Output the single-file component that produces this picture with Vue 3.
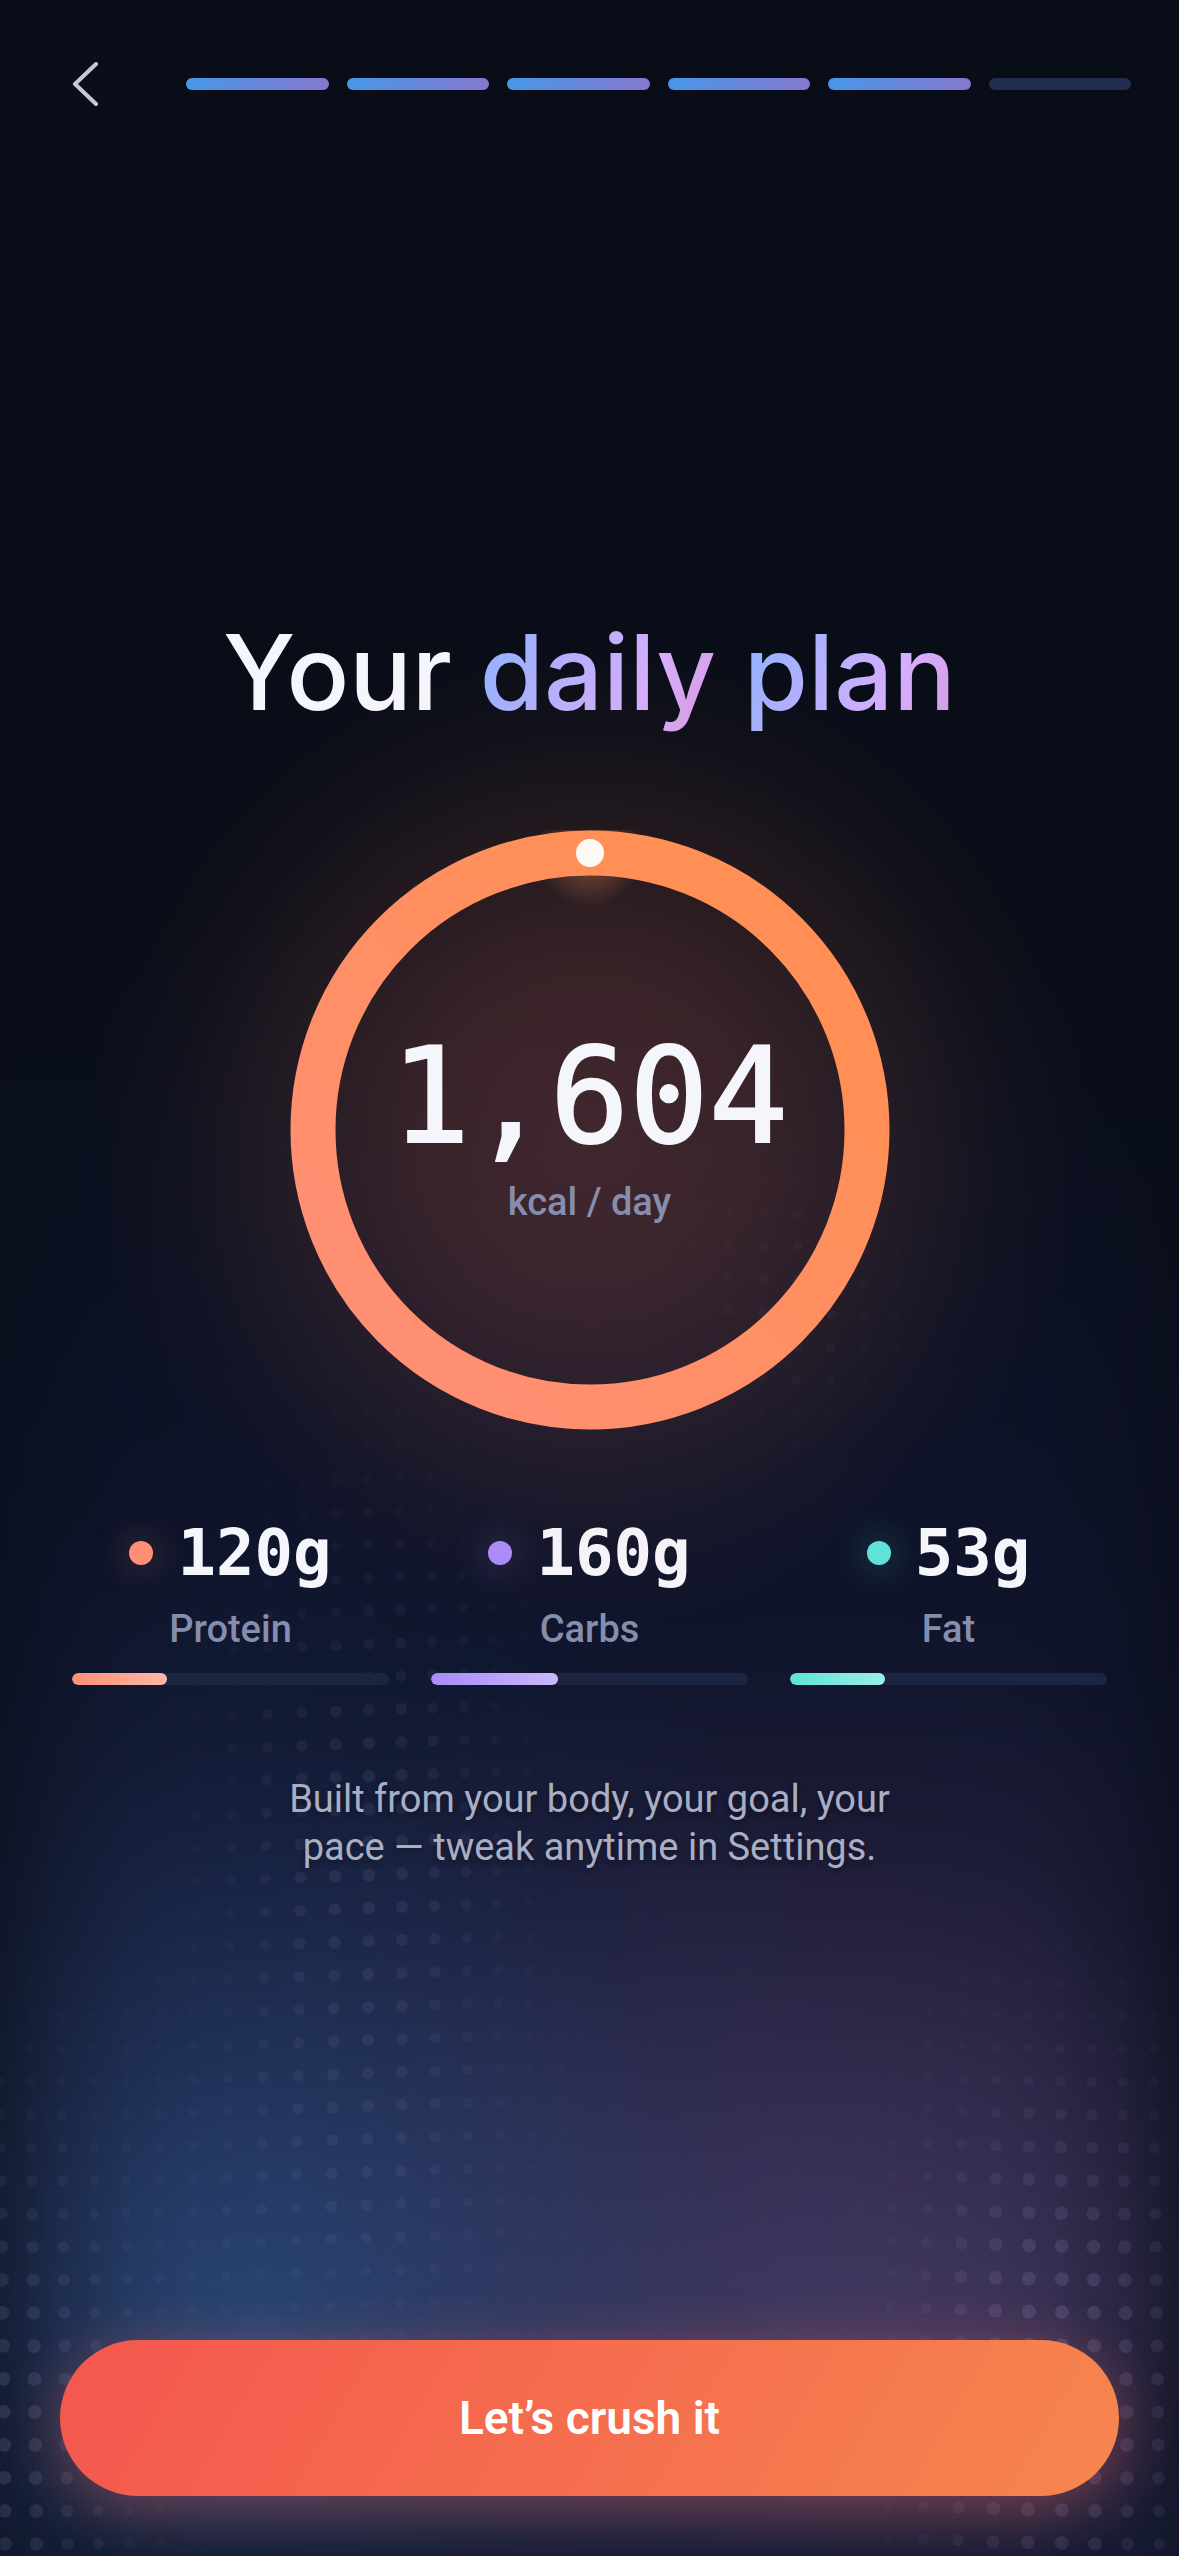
<script setup>
import { computed, ref } from 'vue';

const totalSteps = 6;
const currentStep = ref(5);

const calories = ref(1604);

const macros = [
  { id: 'protein', label: 'Protein', grams: 120, percent: 30 },
  { id: 'carbs', label: 'Carbs', grams: 160, percent: 40 },
  { id: 'fat', label: 'Fat', grams: 53, percent: 30 },
];

const formattedCalories = computed(() => calories.value.toLocaleString('en-US'));

const goBack = () => {
  if (currentStep.value > 1) currentStep.value -= 1;
};

const finish = () => {
  currentStep.value = totalSteps;
};

// Halftone dots: a 33px grid, bent by two slow waves and lit by soft patches
const SPACING = 33;
const patches = [
  { x: 365, y: 1840, rx: 135, ry: 310, alpha: 0.1 },
  { x: 340, y: 2200, rx: 190, ry: 170, alpha: 0.05 },
  { x: -10, y: 2430, rx: 130, ry: 290, alpha: 0.15 },
  { x: 1060, y: 2380, rx: 140, ry: 290, alpha: 0.17 },
  { x: 800, y: 1300, rx: 90, ry: 130, alpha: 0.05 },
];

const buildDots = () => {
  const dots = [];
  for (let row = 34; row < 79; row++) {
    for (let col = 0; col < 37; col++) {
      const baseX = col * SPACING;
      const baseY = row * SPACING - 4;
      const crest = 470 - (2313 - baseY) * 0.2;
      const x = baseX + 6 * Math.cos(((baseX - crest) / 568) * Math.PI * 2);
      const y = baseY + 7 * Math.cos(((baseX - 40) / 1100) * Math.PI * 2);
      const alpha = patches.reduce((sum, p) => {
        const dx = (x - p.x) / p.rx;
        const dy = (y - p.y) / p.ry;
        return sum + p.alpha * Math.exp(-(dx * dx + dy * dy));
      }, 0);
      if (alpha < 0.01) continue;
      dots.push({
        id: `${row}-${col}`,
        x: x.toFixed(1),
        y: y.toFixed(1),
        r: (4 + Math.min(alpha, 0.12) * 24).toFixed(1),
        alpha: alpha.toFixed(3),
      });
    }
  }
  return dots;
};

const dots = buildDots();
</script>

<template>
  <div class="screen">
    <svg class="halftone" viewBox="0 0 1179 2556" preserveAspectRatio="xMidYMax slice" aria-hidden="true">
      <circle
        v-for="dot in dots"
        :key="dot.id"
        :cx="dot.x"
        :cy="dot.y"
        :r="dot.r"
        :fill-opacity="dot.alpha"
      />
    </svg>

    <header class="top-bar">
      <button type="button" class="back-btn" aria-label="Back" @click="goBack">
        <svg viewBox="0 0 28 48" width="28" height="48" aria-hidden="true">
          <path d="M26 4 L5 24 L26 44" />
        </svg>
      </button>
      <div class="steps">
        <span
          v-for="step in totalSteps"
          :key="step"
          class="step"
          :class="{ done: step <= currentStep }"
        ></span>
      </div>
    </header>

    <main class="content">
      <h1 class="title">
        Your <span class="accent">daily</span> <span class="accent">plan</span>
      </h1>

      <section class="ring">
        <svg class="ring-svg" viewBox="0 0 600 600" aria-hidden="true">
          <defs>
            <linearGradient id="ring-stroke" x1="0" y1="1" x2="1" y2="0">
              <stop offset="0.1" stop-color="#ff8f75" />
              <stop offset="0.8" stop-color="#ff8f55" />
            </linearGradient>
            <radialGradient id="knob-glow">
              <stop offset="0.2" stop-color="#ff8e53" stop-opacity="0.36" />
              <stop offset="1" stop-color="#ff8e53" stop-opacity="0" />
            </radialGradient>
          </defs>
          <circle cx="300" cy="23" r="54" fill="url(#knob-glow)" />
          <circle cx="300" cy="300" r="277" fill="none" stroke="url(#ring-stroke)" stroke-width="45" />
          <circle cx="300" cy="23" r="14" fill="#fff9f5" />
        </svg>
        <div class="ring-label">
          <strong class="calories">{{ formattedCalories }}</strong>
          <span class="unit">kcal / day</span>
        </div>
      </section>

      <ul class="macros">
        <li v-for="macro in macros" :key="macro.id" class="macro" :class="macro.id">
          <div class="macro-value">
            <span class="macro-dot"></span>
            <span>{{ macro.grams }}g</span>
          </div>
          <span class="macro-label">{{ macro.label }}</span>
          <div class="track">
            <div class="fill" :style="{ width: `${macro.percent}%` }"></div>
          </div>
        </li>
      </ul>

      <p class="note">Built from your body, your goal, your pace — tweak anytime in Settings.</p>
    </main>

    <footer class="footer">
      <button type="button" class="cta" @click="finish">Let’s crush it</button>
    </footer>
  </div>
</template>

<style>
body {
  margin: 0;
  background: #090d18;
}
</style>

<style scoped>
.screen {
  position: relative;
  display: flex;
  flex-direction: column;
  min-height: 100vh;
  box-sizing: border-box;
  overflow: hidden;
  font-family: Roboto, "Liberation Sans", sans-serif;
  color: #f5f6fc;
  background:
    linear-gradient(to top, rgba(14, 22, 42, 0.75), rgba(14, 22, 42, 0.3) 3%, rgba(14, 22, 42, 0) 7%),
    linear-gradient(to right, rgba(9, 15, 26, 0.6), rgba(9, 15, 26, 0.28) 5%, rgba(9, 15, 26, 0.06) 11%, rgba(9, 15, 26, 0) 16%),
    linear-gradient(to left, rgba(9, 13, 24, 0.62), rgba(9, 13, 24, 0.28) 5%, rgba(9, 13, 24, 0.06) 11%, rgba(9, 13, 24, 0) 16%),
    radial-gradient(ellipse 56% 34% at 22% 92%, rgba(38, 88, 144, 0.56), rgba(34, 76, 128, 0.34) 38%, rgba(28, 60, 106, 0.12) 70%, rgba(28, 60, 106, 0) 100%),
    radial-gradient(ellipse 62% 30% at 70% 93%, rgba(86, 66, 108, 0.62), rgba(74, 54, 92, 0.42) 42%, rgba(64, 42, 76, 0.14) 74%, rgba(64, 42, 76, 0) 100%),
    linear-gradient(to bottom, #090d18 36%, #0c1124 52%, #10152d 66%, #181b36 76%, #282b4e 90%, #282c50 100%);
}

.halftone {
  position: absolute;
  inset: 0;
  width: 100%;
  height: 100%;
  fill: #b9a8e0;
  pointer-events: none;
}

.top-bar,
.content,
.footer {
  position: relative;
}

.top-bar {
  display: flex;
  align-items: center;
  gap: 66px;
  padding: 48px 48px 0;
}

.back-btn {
  display: flex;
  align-items: center;
  justify-content: center;
  width: 72px;
  height: 72px;
  padding: 0;
  border: none;
  background: none;
  cursor: pointer;
}

.back-btn path {
  fill: none;
  stroke: #c5c8dc;
  stroke-width: 4;
  stroke-linecap: round;
  stroke-linejoin: round;
}

.steps {
  display: flex;
  flex: 1;
  gap: 18px;
}

.step {
  flex: 1;
  height: 12px;
  border-radius: 6px;
  background: #222c50;
}

.step.done {
  background: linear-gradient(to right, #4897e8, #8578cf);
}

.content {
  display: flex;
  flex: 1;
  flex-direction: column;
  align-items: center;
  justify-content: center;
  padding: 10px 72px 0;
}

.title {
  margin: 0 0 86px;
  font-family: Inter, "Liberation Sans", sans-serif;
  font-size: 104px;
  font-weight: 500;
  line-height: 144px;
}

.accent {
  color: transparent;
  background: linear-gradient(115deg, #93b2ff 8%, #d6aeff 70%, #d59ade 100%);
  background-clip: text;
}

.ring {
  position: relative;
  width: 600px;
  height: 600px;
}

.ring::before {
  content: "";
  position: absolute;
  inset: -200px;
  border-radius: 50%;
  background: radial-gradient(closest-side, rgba(255, 124, 100, 0.22), rgba(255, 124, 96, 0.19) 32%, rgba(255, 130, 90, 0.11) 58%, rgba(255, 136, 90, 0.03) 82%, rgba(255, 136, 90, 0));
}

.ring-svg {
  position: absolute;
  inset: 0;
}

.ring-label {
  position: relative;
  display: flex;
  flex-direction: column;
  gap: 10px;
  align-items: center;
  justify-content: center;
  height: 100%;
  padding-bottom: 10px;
  box-sizing: border-box;
}

.calories {
  font-family: "DejaVu Sans Mono", monospace;
  font-size: 132px;
  font-weight: 400;
  line-height: 144px;
  -webkit-text-stroke: 2px currentColor;
}

.unit {
  font-size: 38px;
  font-weight: 500;
  line-height: 48px;
  color: #878dac;
}

.macros {
  display: grid;
  grid-template-columns: repeat(3, 1fr);
  gap: 42px;
  width: 100%;
  margin: 81px 0 0;
  padding: 0;
  list-style: none;
}

.macro {
  display: flex;
  flex-direction: column;
  align-items: center;
}

.protein {
  --tone: #ff8f75;
  --tone-light: #ffb8a6;
  --glow: rgba(255, 143, 117, 0.4);
}

.carbs {
  --tone: #a98bfa;
  --tone-light: #cab8fc;
  --glow: rgba(169, 139, 250, 0.4);
}

.fat {
  --tone: #5fe3d8;
  --tone-light: #9ceee6;
  --glow: rgba(95, 227, 216, 0.4);
}

.macro-value {
  display: flex;
  align-items: center;
  gap: 24px;
  font-family: "DejaVu Sans Mono", monospace;
  font-size: 64px;
  font-weight: 700;
  line-height: 84px;
}

.macro-dot {
  width: 24px;
  height: 24px;
  border-radius: 50%;
  background: var(--tone);
  box-shadow: 0 0 36px var(--glow);
}

.macro-label {
  margin-top: 10px;
  font-size: 38px;
  font-weight: 500;
  line-height: 48px;
  color: #878dac;
}

.track {
  width: 100%;
  height: 12px;
  margin-top: 20px;
  overflow: hidden;
  border-radius: 6px;
  background: #1b2541;
}

.fill {
  height: 100%;
  border-radius: 6px;
  background: linear-gradient(to right, var(--tone), var(--tone-light));
}

.note {
  max-width: 680px;
  margin: 90px 0 0;
  font-size: 38px;
  line-height: 48px;
  text-align: center;
  color: #a9aec4;
  text-shadow: 0 3px 6px rgba(0, 0, 0, 0.4);
}

.footer {
  padding: 0 60px 60px;
}

.cta {
  display: block;
  width: 100%;
  height: 156px;
  border: none;
  border-radius: 78px;
  font-family: inherit;
  font-size: 46px;
  font-weight: 600;
  color: #fff;
  background: linear-gradient(120deg, #f4564f, #f6864e);
  box-shadow: 0 12px 60px rgba(255, 107, 90, 0.36);
  cursor: pointer;
}
</style>
